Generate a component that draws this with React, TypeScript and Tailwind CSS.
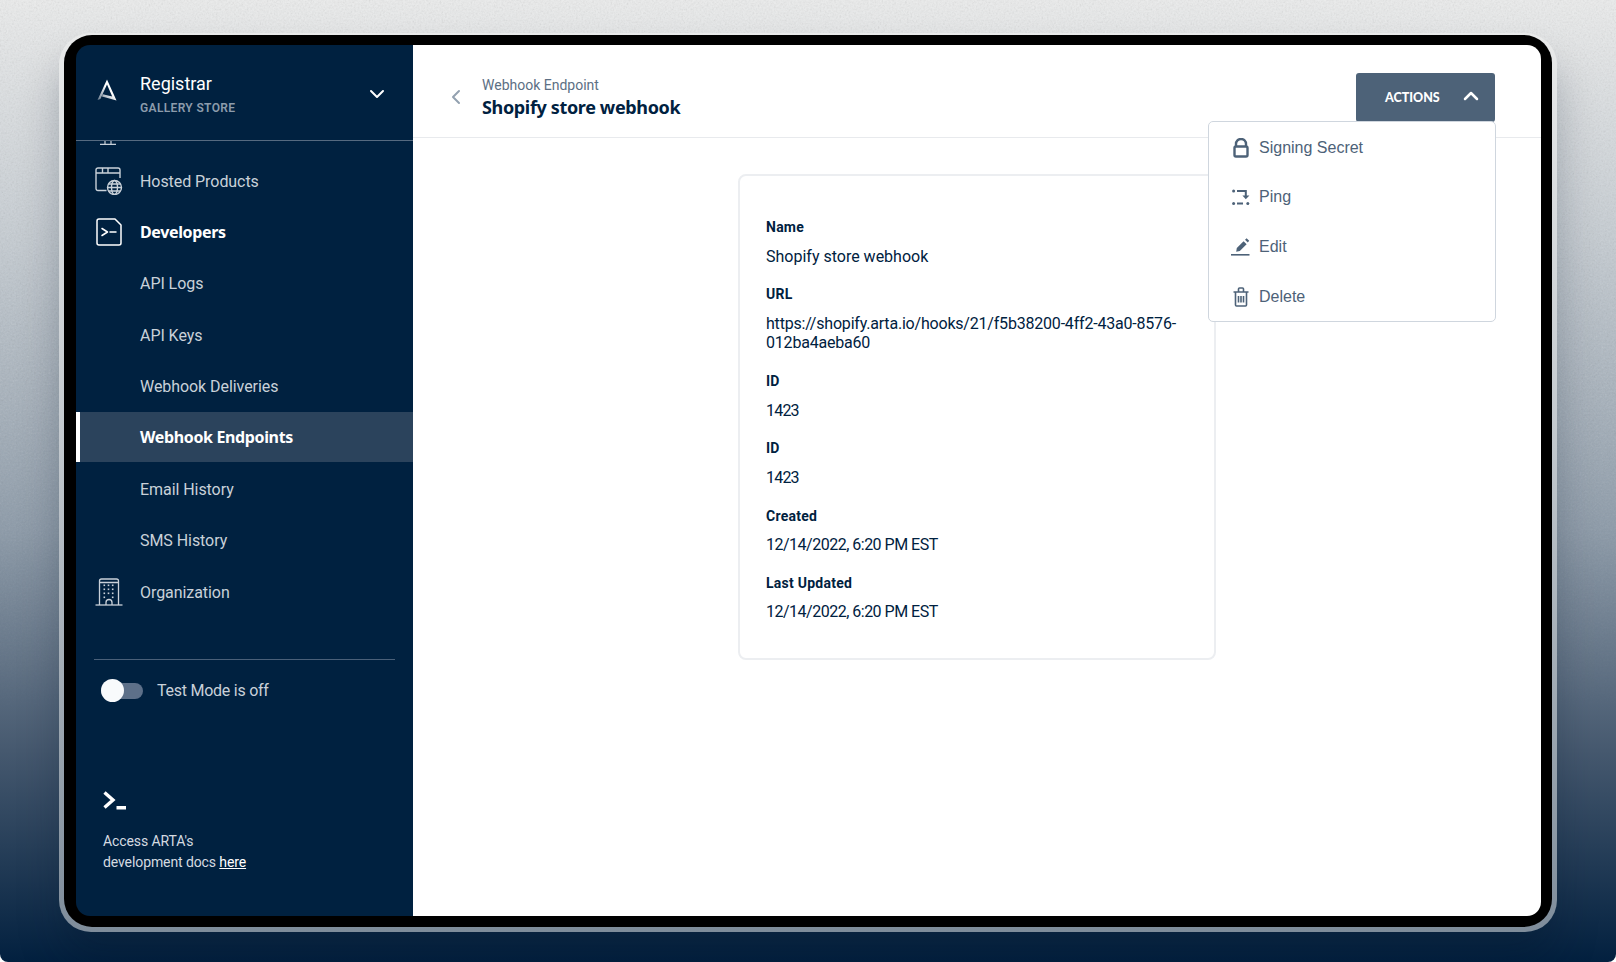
import type { ReactNode } from "react";
import { ChevronDown, ChevronLeft, ChevronUp } from "lucide-react";

const SANS = "font-['Roboto',sans-serif]";

function LogoMark() {
  return (
    <svg viewBox="0 0 20 22" className="h-[22px] w-[20px]">
      <defs>
        <linearGradient id="logo-fade" x1="1" y1="0" x2="0" y2="1">
          <stop offset="0.45" stopColor="#ffffff" />
          <stop offset="1" stopColor="#5f7286" />
        </linearGradient>
      </defs>
      <path d="M10 0.500 L0.500 21 L3.400 20 L10 5.600 L15.200 17.500 L5.800 15.300 L5 17.600 L19.500 21.500 Z" fill="url(#logo-fade)" />
    </svg>
  );
}

function ScrolledIconStub() {
  return (
    <svg viewBox="0 0 16 4" fill="none" stroke="#c9d1d9" strokeWidth="1.2" className="ml-[24px] h-1 w-4">
      <path d="M0 3.400 H16 M5 0 V3 M11 0 V3" />
    </svg>
  );
}

function HostedIcon() {
  return (
    <svg viewBox="0 0 28 28" fill="none" stroke="#c9d1d9" strokeWidth="1.4" className="size-7">
      <path d="M11.500 23.500 H3 a2 2 0 0 1-2-2 V3 a2 2 0 0 1 2-2 H23 a2 2 0 0 1 2 2 V11" />
      <path d="M1 6 H25 M7.500 1 V6 M13 1 V6" />
      <circle cx="19.500" cy="20.500" r="7" />
      <ellipse cx="19.500" cy="20.500" rx="3" ry="7" />
      <path d="M12.500 20.500 H26.500 M13.500 17 H25.500 M13.500 24 H25.500" />
    </svg>
  );
}

function DevelopersIcon() {
  return (
    <svg viewBox="0 0 26 28" fill="none" stroke="#ffffff" strokeWidth="1.5" strokeLinecap="round" strokeLinejoin="round" className="h-7 w-[26px]">
      <path d="M3 1 H19 L25 7 V25 a2 2 0 0 1-2 2 H3 a2 2 0 0 1-2-2 V3 a2 2 0 0 1 2-2 Z" />
      <path d="M6 10.500 L11.500 14 L6 17.500 M14 14 H20" />
    </svg>
  );
}

function BuildingIcon() {
  const dots = [];
  for (let r = 0; r < 4; r++) {
    for (let c = 0; c < 3; c++) {
      if (r === 3 && c === 1) continue;
      dots.push(<rect key={`${r}-${c}`} x={8.500 + c * 4.200} y={6.500 + r * 4} width="1.600" height="1.600" fill="#c9d1d9" stroke="none" />);
    }
  }
  return (
    <svg viewBox="0 0 28 28" fill="none" stroke="#c9d1d9" strokeWidth="1.300" className="size-7">
      <path d="M0.500 27 H27.500" />
      <path d="M4.500 27 V3 a2 2 0 0 1 2-2 H21.500 a2 2 0 0 1 2 2 V27 M4.500 4.500 H23.500" />
      <path d="M11 27 V24.500 a3 3 0 0 1 6 0 V27" />
      {dots}
    </svg>
  );
}

function LockIcon() {
  return (
    <svg viewBox="0 0 16 20" fill="none" stroke="#4d6278" strokeWidth="2.400" className="h-5 w-4">
      <path d="M3 9 V6 a5 5 0 0 1 10 0 V9" />
      <rect x="1.500" y="8.500" width="13" height="10" rx="1.500" />
    </svg>
  );
}

function PingIcon() {
  return (
    <svg viewBox="0 0 18 16" fill="#4d6278" className="h-4 w-[18px]">
      <circle cx="1.600" cy="2" r="1.500" />
      <rect x="5" y="1" width="9" height="2" />
      <rect x="12.800" y="1" width="2" height="6" />
      <path d="M10.400 6.500 H17.400 L13.800 10.200 Z" />
      <circle cx="1.600" cy="14.500" r="1.500" />
      <rect x="5" y="13.500" width="6" height="2" />
      <circle cx="15.800" cy="14.500" r="1.500" />
    </svg>
  );
}

function EditIcon() {
  return (
    <svg viewBox="0 0 19 19" fill="#4d6278" className="size-[19px]">
      <path d="M0 17 H18.500 V18.600 H0 Z" />
      <path d="M5.200 14.800 L5.800 11 L12.600 4.200 L15.600 7.200 L8.800 14 Z" />
      <path d="M14 2.800 L15.600 1.200 L18.200 3.800 L16.800 5.600 Z" />
    </svg>
  );
}

function TrashIcon() {
  return (
    <svg viewBox="0 0 16 20" fill="none" stroke="#4d6278" strokeWidth="1.600" className="h-5 w-4">
      <path d="M0.500 5 H15.500 M5.500 4.500 V2 a1 1 0 0 1 1-1 H9.500 a1 1 0 0 1 1 1 V4.500" />
      <path d="M2.500 5 V18 a1 1 0 0 0 1 1 H12.500 a1 1 0 0 0 1-1 V5" />
      <path d="M5.500 9 V15.500 M8 9 V15.500 M10.500 9 V15.500" />
    </svg>
  );
}

function TerminalMark() {
  return (
    <svg viewBox="0 0 24 19" fill="none" stroke="#ffffff" strokeWidth="3.400" className="h-[19px] w-6">
      <path d="M1.500 1.500 L10 9 L1.500 16.500" />
      <path d="M13.500 16.700 H23" />
    </svg>
  );
}

function NavRow({ label, icon, active, strong }: { label: string; icon?: ReactNode; active?: boolean; strong?: boolean }) {
  const tone = active
    ? "bg-[#2b435c] font-['Noto_Sans',sans-serif] font-bold tracking-[-0.36px] text-white"
    : strong
      ? "font-['Noto_Sans',sans-serif] font-bold tracking-[-0.36px] text-white"
      : "pt-[2px] tracking-[-0.06px] text-[#c9d1d9]";
  return (
    <div className={`relative flex h-[50px] items-center pl-[64px] text-base ${tone}`}>
      {active && <span className="absolute inset-y-0 left-0 w-1 bg-white" />}
      {icon && <span className="absolute top-1/2 left-[19px] flex w-7 -translate-y-1/2 justify-center">{icon}</span>}
      {label}
    </div>
  );
}

function Field({ label, valueClass, children }: { label: string; valueClass?: string; children: ReactNode }) {
  return (
    <div className="mb-[18.300px] last:mb-0">
      <div className="text-sm leading-5 font-bold tracking-[0.25px]">{label}</div>
      <div className={`mt-[9.500px] text-base leading-[19.500px] ${valueClass ?? ""}`}>{children}</div>
    </div>
  );
}

function MenuItem({ icon, label }: { icon: ReactNode; label: string }) {
  return (
    <div className="flex h-[49.600px] items-center">
      <span className="flex w-[50px] justify-center pl-[13px]">{icon}</span>
      <span>{label}</span>
    </div>
  );
}

function Sidebar() {
  return (
    <aside className="flex w-[337px] shrink-0 flex-col bg-[#002140]">
      <header className="flex h-[96px] shrink-0 items-center border-b border-[#566a80] pt-[2px] pr-[24px] pl-[21px]">
        <span className="-mt-[8px] flex"><LogoMark /></span>
        <div className="ml-[23px] flex-1">
          <div className="text-lg leading-6 text-white">Registrar</div>
          <div className="mt-[4px] text-xs leading-4 font-semibold tracking-[0.35px] text-[#8c9cac]">GALLERY STORE</div>
        </div>
        <ChevronDown className="size-6 text-white" strokeWidth={2} />
      </header>
      <ScrolledIconStub />
      <div className="pt-[10.500px]">
        <nav className="flex flex-col gap-[1.400px]">
          <NavRow label="Hosted Products" icon={<HostedIcon />} />
          <NavRow label="Developers" icon={<DevelopersIcon />} strong />
          <NavRow label="API Logs" />
          <NavRow label="API Keys" />
          <NavRow label="Webhook Deliveries" />
          <NavRow label="Webhook Endpoints" active />
          <NavRow label="Email History" />
          <NavRow label="SMS History" />
          <NavRow label="Organization" icon={<BuildingIcon />} />
        </nav>
      </div>
      <div className="mx-[18px] mt-[42px] border-t border-[#4a6079] pt-[19px] pl-[7px]">
        <div className="flex h-6 items-center">
          <span className="relative h-4 w-[42px] rounded-full bg-[#5d7089]">
            <span className="absolute top-[-4px] left-0 size-[23px] rounded-full bg-[#f8fafc]" />
          </span>
          <span className="ml-[14px] text-base tracking-[-0.25px] text-[#c9d1d9]">Test Mode is off</span>
        </div>
      </div>
      <div className="mt-[88px] ml-[27px]">
        <TerminalMark />
        <p className="mt-[21px] text-sm leading-[21.500px] tracking-[-0.1px] text-[#d5dbe1]">
          Access ARTA's
          <br />
          development docs <a className="text-white underline">here</a>
        </p>
      </div>
    </aside>
  );
}

function Main() {
  return (
    <main className="relative flex flex-1 flex-col bg-white text-[#002140]">
      <header className="flex h-[93px] shrink-0 items-center border-b border-[#e8eaed] pt-[12px] pr-[46px] pl-[31px]">
        <ChevronLeft className="size-6 text-[#93a1b0]" strokeWidth={2} />
        <div className="ml-[14px] flex-1">
          <div className="text-sm leading-5 text-[#5c6f84]">Webhook Endpoint</div>
          <div className="font-['Noto_Sans',sans-serif] text-lg leading-6 font-bold tracking-[-0.35px]">Shopify store webhook</div>
        </div>
      </header>
      <section className="flex justify-center pt-[36px] pr-[1px]">
        <div className="w-[478px] rounded-lg border-2 border-[#eceef1] pt-[41px] pr-[26px] pb-[36.500px] pl-[26.500px]">
          <Field label="Name">Shopify store webhook</Field>
          <Field label="URL" valueClass="tracking-[-0.2px]">https://shopify.arta.io/hooks/21/f5b38200-4ff2-43a0-8576-012ba4aeba60</Field>
          <Field label="ID" valueClass="tracking-[-0.8px]">1423</Field>
          <Field label="ID" valueClass="tracking-[-0.8px]">1423</Field>
          <Field label="Created" valueClass="tracking-[-0.5px]">12/14/2022, 6:20 PM EST</Field>
          <Field label="Last Updated" valueClass="tracking-[-0.5px]">12/14/2022, 6:20 PM EST</Field>
        </div>
      </section>
      <div className="absolute top-[28px] right-[46px] flex h-[49px] w-[139px] items-center justify-between rounded-[3px] bg-[#4d6278] pr-[12px] pl-[29px] font-['Lato',sans-serif] text-[12.500px] font-black text-white">
        <span className="mt-[2px]">ACTIONS</span>
        <ChevronUp className="-mt-[3px] size-6" strokeWidth={2.500} />
      </div>
      <div className="absolute top-[76px] right-[45px] w-[288px] rounded-[5px] border border-[#cfd6de] bg-white pt-[1px] font-['Liberation_Sans',sans-serif] text-base text-[#4d6278]">
        <MenuItem icon={<LockIcon />} label="Signing Secret" />
        <MenuItem icon={<PingIcon />} label="Ping" />
        <MenuItem icon={<EditIcon />} label="Edit" />
        <MenuItem icon={<TrashIcon />} label="Delete" />
      </div>
    </main>
  );
}

export default function App() {
  return (
    <div className={`relative h-[962px] w-[1616px] overflow-hidden rounded-b-lg bg-[linear-gradient(180deg,#eceded_0%,#c5ccd2_25%,#8c9aa8_55%,#46596f_78%,#02203f_100%)] pt-[33px] pl-[59px] ${SANS}`}>
      <svg className="absolute inset-0 h-full w-full opacity-25 [mask-image:linear-gradient(180deg,#000_0%,#000_40%,transparent_75%)]">
        <filter id="grain">
          <feTurbulence type="fractalNoise" baseFrequency="0.55" numOctaves="2" />
          <feColorMatrix type="saturate" values="0" />
        </filter>
        <rect width="100%" height="100%" filter="url(#grain)" />
      </svg>
      <div className="relative h-[899px] w-[1498px] rounded-[32px] bg-[linear-gradient(180deg,#e9eaea_0%,#c3c9ce_45%,#7f8d9b_100%)] px-[5px] pt-[2px] pb-[5px] shadow-[0_30px_40px_rgba(0,20,40,0.25)]">
        <div className="h-full rounded-[28px] bg-black pt-[10px] pr-[11px] pb-[11px] pl-[12px]">
          <div className="flex h-full overflow-hidden rounded-[14px]">
            <Sidebar />
            <Main />
          </div>
        </div>
      </div>
    </div>
  );
}
